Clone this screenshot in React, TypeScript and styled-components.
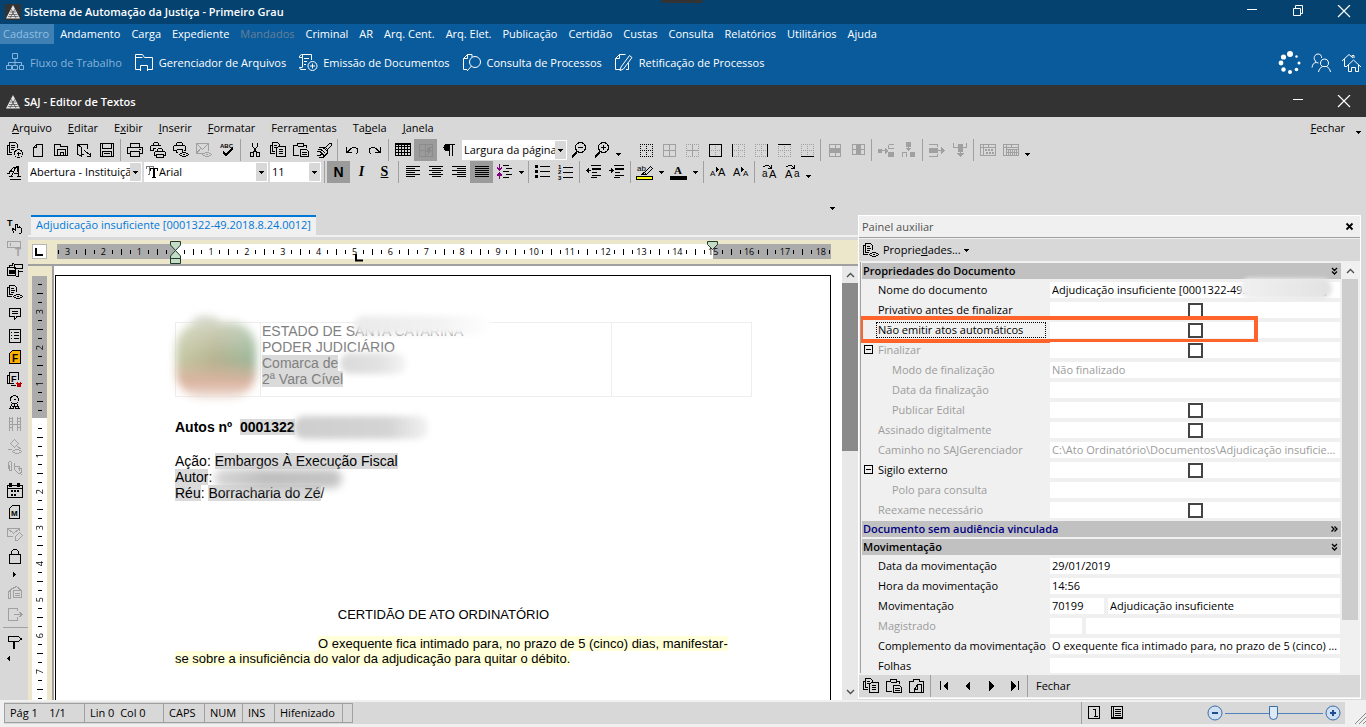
import React, { ReactNode } from 'react';
import styled, { createGlobalStyle, css } from 'styled-components';

const UI_FONT = '"Open Sans", "Noto Sans", sans-serif';
const DOC_FONT = '"Liberation Sans", Arial, sans-serif';
const C = {
  navy: '#05426f',
  blue: '#0a5b9b',
  dark: '#333333',
  face: '#d8d8d8',
  pale: '#f0f0f0',
  line: '#a0a0a0',
  cream: '#ece6ca',
  orange: '#ff642b',
  link: '#0078d7',
};

const GlobalStyle = createGlobalStyle`
  * { box-sizing: border-box; }
  body { margin: 0; background: ${C.face}; font-family: ${UI_FONT}; font-size: 11px; line-height: 16px; color: #000; }
  button, input, select { font: inherit; color: inherit; margin: 0; padding: 0; border: 0; border-radius: 0; background: none; }
  svg { display: block; flex: none; }
`;

/* ---------- icons: 18 x 18 pixel grid, outline path, filled path, lettering ---------- */

type Glyph = { s?: string; f?: string; x?: ReactNode };

const letter = (x: number, y: number, size: number, t: string, bold = true) => (
  <text x={x} y={y} fontSize={size} fontWeight={bold ? 700 : 400} fontFamily="Liberation Sans, sans-serif" fill="currentColor" stroke="none">
    {t}
  </text>
);

const PAGES = 'M5.5 12.5H1.5V4.5H3.5M5.5 10.5H3.5V1.5H8.5L10.5 3.5V5M5 4.5H8M5 6.5H8';
const EYE = 'M7.5 13.5C9 11 15 11 16.5 13.5C15 16 9 16 7.5 13.5ZM11 13.5H13';
const GRID_DOTS = 'M3.5 3v13M9.5 3v13M15.5 3v13M3 3.5h13M3 9.5h13M3 15.5h13';

const GLYPHS: Record<string, Glyph> = {
  docPlus: { s: 'M6 13.5H1.5V4.5H3.5V1.5H9.5L11.5 3.5V7M3.5 4.5V11.5H6M5 4.5H9M5 6.5H9M5 8.5H8M12.5 8.5A4 4 0 1 0 12.5 16.5A4 4 0 1 0 12.5 8.5M12.5 10.5V15M10.5 12.5H15' },
  newDoc: { s: 'M4.5 15.5V6.5L7.5 3.5H13.5V15.5ZM4.5 6.5H7.5V3.5' },
  open: { s: 'M5 14.5H2.5V3.5H8.5V5.5H15.5V14.5H5.5V8.5H13.5V14.5M8.5 14V11.5H11.5V14' },
  docArrow: { s: 'M2.5 14V3.5H12.5V8M2.5 3.5L6.5 6.5V15.5L2.5 13M7 13.5H9M9.5 9.5L15.5 14.5M15.5 12V15.5H12' },
  save: { s: 'M2.5 2.5H15.5V15.5H2.5ZM4.5 3V7.5H13.5V3M4.5 15V10.5H13.5V15M6 12.5H12' },
  print: { s: 'M4.5 6V2.5H13.5V6M4.5 12.5H1.5V6.5H16.5V12.5H13.5M4.5 10.5H13.5V15.5H4.5ZM13 8.5H15' },
  printers: { s: 'M4.5 4.5V2.5L5.5 1.5H8.5L9.5 2.5V4.5M4.5 9.5H1.5V5.5L2.5 4.5H11.5L12.5 5.5M4.5 9.5V7.5H7M8.5 10.5V8.5L9.5 7.5H12.5L13.5 8.5V10.5M7.5 14.5H5.5V11.5L6.5 10.5H15.5L16.5 11.5V14.5H14.5M7.5 13.5H14.5V16.5H7.5Z' },
  printEye: { s: 'M4.5 4.5V2.5L5.5 1.5H9.5L10.5 2.5V4.5M4.5 9.5H1.5V5.5L2.5 4.5H12.5L13.5 5.5V9.5H11.5M4.5 8.5H10.5V10.5M4.5 8.5V11.5H6' + EYE },
  mailEye: { s: 'M8 12.5H1.5V2.5H13.5V9.5M1.5 2.5L7.5 8.5L13.5 2.5M1.5 12.5L5.5 7.5' + EYE },
  spell: { s: 'M5 10.5L8 13.5L15 6.5M5 11.5L8 14.5L15 7.5', x: letter(2, 7, 6, 'ABC') },
  cut: { s: 'M6.5 2V5L11 12M11.5 2V5L7 12M7.5 11.5V15.5H4.5V11.5ZM10.5 11.5V15.5H13.5V11.5Z' },
  copy: { s: PAGES + 'M7.5 15.5V7.5L9.5 5.5H16.5V15.5ZM10 8.5H14M10 10.5H14M10 12.5H14' },
  paste: { s: 'M7 14.5H1.5V4.5H5.5V2.5H11.5V4.5H14.5V7M5.5 5.5H11.5M8.5 15.5V8.5H14.5L16.5 10.5V15.5ZM10 11.5H15M10 13.5H15' },
  brush: { s: 'M10.5 6.5L14.5 2.5H16.5V4.5L12.5 8.5M4 6.5H8L12.5 10.5V13M2.5 8.5H6L10.5 12.5M1.5 10.5H5L9 14.5M2 14.5H5L7 12.5M4 16.5H8L12 12.5M8 6.5H10.5L12.5 8.5V11' },
  undo: { s: 'M3.5 6V11.5H9M4 11.5L8 7.5C11 5 16 7 14.5 11.5L12.5 13.5' },
  redo: { s: 'M14.5 6V11.5H9M14 11.5L10 7.5C7 5 2 7 3.5 11.5L5.5 13.5' },
  table: { s: 'M1.5 3.5H16.5V14.5H1.5ZM1 2.5H17M1 5.5H17M1 8.5H17M1 11.5H17M4.5 3V15M7.5 3V15M10.5 3V15M13.5 3V15' },
  tableBolt: { s: 'M2.5 3.5H15.5V15.5H2.5ZM2.5 9.5H9M8.5 3.5V15.5', f: 'M11 6h4l-2 3h2l-5 6 1-4h-2z' },
  pilcrow: { s: 'M9.5 3V15M12.5 3V15M8 3.5H15', f: 'M9 3H7a3 3 0 0 0 0 7h2z' },
  zoomOut: { s: 'M10.5 1.5A5 5 0 1 0 10.5 11.5A5 5 0 1 0 10.5 1.5M8 6.5H13M6.5 10.5L2 15.5M7 11.5L2 16.5' },
  zoomIn: { s: 'M10.5 1.5A5 5 0 1 0 10.5 11.5A5 5 0 1 0 10.5 1.5M8 6.5H13M10.5 4V9M6.5 10.5L2 15.5M7 11.5L2 16.5' },
  gridAll: { s: 'M3.5 3.5H15.5V15.5H3.5ZM9.5 3.5V15.5M3.5 9.5H15.5' },
  mergeRow: { s: 'M3.5 3.5H14.5V15.5H3.5ZM9.5 3V7M9.5 12V16', f: 'M3 7h12v5H3z' },
  mergeCol: { s: 'M3.5 3.5H15.5V13.5H3.5ZM3 8.5H7M12 8.5H16', f: 'M7 3h5v11H7z' },
  splitA: { s: 'M1 9.5H9M11.5 3.5H17M11.5 3.5V7.5H17', f: 'M1 8h4v4H1zM8 7l3 3-3 3zM11 11h6v5h-6z' },
  splitB: { s: 'M8.5 2V9M2.5 16V11.5H6.5V16', f: 'M6 1h5v5H6zM5 7h7l-4 3zM10 11h5v5h-5z' },
  splitC: { s: 'M1 3.5H9.5V6M9.5 13V15.5H1M9 9.5H16', f: 'M1 7h9v5H1zM13 6l4 3-4 4z' },
  splitD: { s: 'M2.5 2V6.5H7M15.5 2V6.5H11M9.5 7V15', f: 'M7 3h5v8H7zM5 12h8l-4 4z' },
  tableA: { s: 'M1.5 3.5H16.5V14.5H1.5ZM1 6.5H17M4.5 3V15M9.5 3V6', f: 'M6 8h2v2H6zM9 8h2v2H9zM12 8h2v2h-2zM7 11h2v2H7zM10 11h2v2h-2zM13 11h2v2h-2z' },
  tableB: { s: 'M1.5 3.5H16.5V14.5H1.5ZM1 6.5H17M4.5 3V15M9.5 3V6M6.5 8V14M8.5 8V14M10.5 8V14M12.5 8V14M14.5 8V14M5 8.5H16M5 11.5H16' },
  styles: { s: 'M4 16.5H15M10.5 3.5L5 13.5M11.5 3.5L12.5 13.5M12.5 3V13.5M8 10.5H12M3 13.5H7M11 13.5H15M7.5 4.5L2.5 10.5M8.5 4V7M4 8.5H8M1 10.5H4' },
  left: { s: 'M2 3.5H16M2 5.5H11M2 7.5H16M2 9.5H11M2 11.5H16M2 13.5H11' },
  center: { s: 'M2 3.5H16M4.5 5.5H13.5M2 7.5H16M4.5 9.5H13.5M2 11.5H16M4.5 13.5H13.5' },
  right: { s: 'M2 3.5H16M7 5.5H16M2 7.5H16M7 9.5H16M2 11.5H16M7 13.5H16' },
  justify: { s: 'M2 3.5H16M2 5.5H16M2 7.5H16M2 9.5H16M2 11.5H16M2 13.5H16' },
  spacing: {
    s: 'M7 2.5H13M10 5.5H16M7 8.5H13M10 11.5H16M7 14.5H13',
    x: <path d="M3.5 1V7M1 4.5L3.5 7L6 4.5M3.5 10V16M1 13L3.5 10.5L6 13" stroke="#800080" fill="none" strokeWidth={1.5} />,
  },
  bullets: { s: 'M6 3.5H16M6 8.5H16M6 13.5H16', f: 'M1 2h3v3H1zM1 7h3v3H1zM1 12h3v3H1z' },
  numbers: { s: 'M6 4.5H16M6 9.5H16M6 14.5H16', x: <>{letter(1, 6, 6, '1')}{letter(1, 11, 6, '2')}{letter(1, 17, 6, '3')}</> },
  outdent: { s: 'M6 2.5H16M7 5.5H16M7 6.5H16M7 9.5H12M7 12.5H16M6 14.5H12M1 7.5H6', f: 'M4 5v5L1 7.5z' },
  indent: { s: 'M6 2.5H16M7 5.5H16M7 6.5H16M7 9.5H12M7 12.5H16M6 14.5H12M1 7.5H6', f: 'M3 5v5L6 7.5z' },
  highlight: {
    s: 'M8.5 9.5L14.5 3.5L16.5 5.5L10.5 11.5ZM5 11.5L8.5 9.5L10.5 11.5L5 11.5',
    x: <>{letter(1, 8, 8, 'ab', false)}<path d="M.5 13.5H16.5V16.5H.5Z" fill="#ffff00" stroke="#000" /></>,
  },
  fontColor: { f: 'M1 13h17v4H1z', x: <text x={5} y={11} fontSize={11} fontWeight={700} fontFamily="Liberation Serif, serif" fill="currentColor">A</text> },
  grow: { f: 'M7 4l3 2-3 3z', x: <>{letter(1, 13, 8, 'A', false)}{letter(9, 13, 11, 'A', false)}</> },
  shrink: { f: 'M9 4l3 2-3 3z', x: <>{letter(1, 13, 11, 'A', false)}{letter(11, 13, 8, 'A', false)}</> },
  toUpper: { s: 'M3.5 4L5.5 2.5H8.5L11 5M11.5 2V5.5H8', x: <>{letter(2, 14, 10, 'a', false)}{letter(9, 15, 11, 'A', false)}</> },
  toLower: { s: 'M3.5 4L5.5 2.5H8.5L11 5M11.5 2V5.5H8', x: <>{letter(2, 15, 11, 'A', false)}{letter(11, 14, 10, 'a', false)}</> },
  textHand: { s: 'M8.5 16.5L6.5 13.5V11.5L9.5 13V7.5H11.5V10.5H13.5V9.5L15.5 11.5V15.5L13.5 17', x: letter(1, 9, 9, 'T') },
  textBox: { s: 'M1.5 2.5H14.5V8.5H1.5ZM4 4V7', x: letter(9, 17, 10, 'T') },
  stack: { s: 'M3.5 6V4.5H6.5V2.5H8M8.5 3.5H16.5V7.5H8.5ZM1.5 6.5H9.5V14.5H1.5ZM16.5 10.5H12.5M12.5 8.5V15.5H9.5', f: 'M3 9h6v4H3z' },
  docEye: { s: 'M6 13.5H1.5V4.5H3.5M7 11.5H3.5V2.5H8.5L10.5 4.5V9M5 5.5H8M5 7.5H9M5 9.5H8' + EYE },
  comment: { s: 'M3.5 3.5H14.5V11.5H11L8.5 14.5V11.5H3.5ZM6 6.5H12M6 8.5H12' },
  list: { s: 'M3.5 2.5H14.5V15.5H3.5ZM5 5.5H6M8 5.5H13M5 8.5H6M8 8.5H13M5 11.5H6M8 11.5H13' },
  formF: { x: <><path d="M3.5 14.5V4.5L6.5 1.5H14.5V14.5Z" fill="#ffb000" stroke="#000" />{letter(6, 13, 10, 'F')}</> },
  formX: { s: 'M10 14.5H5M4 12.5H1.5V4.5H3.5V1.5H12.5V9M3.5 4V12.5H8', x: <>{letter(5, 11, 9, 'F')}<path d="M11 12L15 16M15 12L11 16" stroke="#c00000" strokeWidth={2} /></> },
  seal: { s: 'M8.5 2.5A4 4 0 1 0 8.5 10.5A4 4 0 1 0 8.5 2.5M8 6.5H10M6.5 10L4 15.5H7L8.5 12L10 15.5H13L10.5 10M6 13.5H12' },
  film: { s: 'M3.5 2V16M6.5 2V16M11.5 2V16M14.5 2V16M3 3.5H7M3 6.5H7M3 9.5H7M3 12.5H7M11 3.5H15M11 6.5H15M11 9.5H15M11 12.5H15M7 9.5H11' },
  gavel: { s: 'M4.5 6.5L8.5 2.5L12.5 6.5L8.5 10.5ZM10 8.5L15 12M2 12.5H6M6.5 14.5C8 12 14 12 15.5 14.5C14 17 8 17 6.5 14.5' },
  clip: { s: 'M2.5 10V3.5L4 2.5L5.5 3.5V11.5H3.5V6M8.5 4V10.5L12.5 14.5L15.5 13.5V9.5H11.5M9 7.5H13.5V12M14 14L16.5 16.5' },
  calendar: { s: 'M1.5 4.5H16.5V16.5H1.5ZM1 7.5H17', f: 'M3 2h3v4H3zM11 2h3v4h-3zM5 9h2v2H5zM8 9h2v2H8zM11 9h2v2h-2zM5 13h2v2H5zM8 13h2v2H8z' },
  formM: { s: 'M3.5 15.5V5.5L6.5 2.5H13.5V15.5Z', x: letter(5, 13, 8, 'M') },
  mailPen: { s: 'M7 11.5H1.5V3.5H13.5V6M1.5 3.5L7.5 8.5L13.5 3.5M9.5 11.5L13.5 7.5L16.5 10.5L11.5 15.5H9.5Z' },
  lock: { s: 'M3.5 7.5H14.5V16.5H3.5ZM5.5 7V4.5L7.5 2.5H10.5L12.5 4.5V7' },
  phone: { s: 'M2.5 16V8.5L4.5 7.5V15.5H2.5M4.5 6.5L10.5 3.5L15.5 7.5V14.5H7.5V7.5H15.5M9 10.5H14M9 12.5H14' },
  exportDoc: { s: 'M11.5 6V3.5H2.5V15.5H11.5V12M8 9.5H16M13.5 7L16 9.5L13.5 12' },
  signpost: { s: 'M2.5 4.5H12.5L15.5 7L12.5 9.5H2.5ZM8.5 10V17M7.5 10V17' },
  pasteBack: { s: 'M7 15.5H1.5V4.5H5.5V2.5H11.5V4.5H15.5V15.5H13M6.5 12.5L9.5 7.5H13.5V15.5H6.5V12.5H9.5V8' },
  first: { s: 'M4.5 4V13', f: 'M12 4v10l-5-5z' },
  prev: { f: 'M11 4v10L6 9z' },
  next: { f: 'M7 4v10l5-5z' },
  last: { s: 'M13.5 4V13', f: 'M6 4v10l5-5z' },
  pageOne: { s: 'M3.5 2.5H14.5V14.5H3.5ZM8 5.5H10.5V12.5M9 12.5H13' },
  pageLines: { s: 'M3.5 2.5H14.5V14.5H3.5ZM5.5 2.5V14.5M7 5.5H13M7 7.5H13M7 9.5H13M7 11.5H13M3 13.5H15' },
};

function Icon({ name }: { name: string }) {
  const g = GLYPHS[name];
  return (
    <svg width="18" height="18" viewBox="0 0 18 18" fill="none" stroke="none" shapeRendering="crispEdges" aria-hidden="true">
      {g.s && <path d={g.s} stroke="currentColor" />}
      {g.f && <path d={g.f} fill="currentColor" />}
      {g.x}
    </svg>
  );
}

const EDGE: Record<string, string> = {
  inner: 'M9.5 3V16M3 9.5H16',
  outer: 'M3.5 3.5H15.5V15.5H3.5Z',
  left: 'M3.5 3V16',
  right: 'M15.5 3V16',
  top: 'M3 3.5H16',
  bottom: 'M3 15.5H16',
};

function BorderIcon({ edge, tone = C.line }: { edge?: string; tone?: string }) {
  return (
    <svg width="18" height="18" viewBox="0 0 18 18" fill="none" shapeRendering="crispEdges" aria-hidden="true">
      <path d={GRID_DOTS} stroke={tone} strokeDasharray="1 1" />
      {edge && <path d={EDGE[edge]} stroke={edge === 'inner' ? C.line : '#000'} />}
    </svg>
  );
}

const Caret = ({ dir = 'down' }: { dir?: 'down' | 'left' | 'right' }) => {
  const d = { down: 'M0 1h5v1H4v1H3v1H2V3H1V2H0z', left: 'M3 0v5H2V4H1V3H0V2h1V1h1V0z', right: 'M1 0v5h1V4h1V3h1V2H3V1H2V0z' }[dir];
  return (
    <svg width="5" height="5" viewBox="0 0 5 5" shapeRendering="crispEdges" aria-hidden="true">
      <path d={d} fill="#000" />
    </svg>
  );
};

const Logo = () => (
  <svg width="16" height="16" viewBox="0 0 16 16" aria-hidden="true">
    <rect width="16" height="16" fill={C.dark} />
    <path d="M8 1L15 14.5H1Z" fill="#e6e6e6" />
    <path d="M6 5L11 14M10 5L5 14M5 8H11M4 10.5H12.5M3 12.5H13.5" stroke={C.dark} strokeWidth=".6" />
  </svg>
);

/* ---------- window chrome ---------- */

const Shell = styled.div`
  display: flex;
  flex-direction: column;
  height: 100vh;
  min-height: 480px;
  overflow: hidden;
`;

const TitleBar = styled.header<{ $dark?: boolean }>`
  position: relative;
  display: flex;
  align-items: center;
  flex: none;
  height: ${p => (p.$dark ? 32 : 24)}px;
  padding: ${p => (p.$dark ? 2 : 0)}px 0 0 5px;
  gap: 3px;
  background: ${p => (p.$dark ? C.dark : C.navy)};
  color: #fff;
`;
const TitleText = styled.h1`
  flex: 1;
  margin: 0;
  font-size: 11px;
  font-weight: 600;
  line-height: 16px;
`;
const ControlGroup = styled.div`
  display: flex;
`;
const WinButton = styled.button`
  display: flex;
  justify-content: center;
  width: 46px;
  height: 20px;
  align-items: center;
  &:last-child { width: 45px; }
`;
const Notch = styled.i`
  position: absolute;
  top: 0;
  left: 50%;
  width: 42px;
  height: 3px;
  margin-left: -22px;
  background: ${C.dark};
  border-radius: 0 0 3px 3px;
`;

const WinIcon = ({ kind }: { kind: 'min' | 'max' | 'close' }) => (
  <svg width="14" height="14" viewBox="0 0 14 14" fill="none" stroke="#fff" aria-hidden="true">
    {kind === 'min' && <path d="M2 4.5H12" />}
    {kind === 'max' && <path d="M2.5 3.5H9.5V10.5H2.5ZM4.5 3V.5H11.5V8.5H10" />}
    {kind === 'close' && <path d="M1 0L13 12M13 0L1 12" strokeWidth="1.2" />}
  </svg>
);

function WinControls({ full }: { full?: boolean }) {
  return (
    <ControlGroup>
      <WinButton aria-label="Minimizar"><WinIcon kind="min" /></WinButton>
      {full && <WinButton aria-label="Restaurar"><WinIcon kind="max" /></WinButton>}
      <WinButton aria-label="Fechar"><WinIcon kind="close" /></WinButton>
    </ControlGroup>
  );
}

const MainMenu = styled.nav`
  display: flex;
  flex: none;
  gap: 1px;
  height: 20px;
  background: ${C.blue};
  color: #fff;
`;
const MainMenuItem = styled.button<{ $state?: 'active' | 'off' }>`
  padding: 0 5px;
  white-space: nowrap;
  ${p => p.$state === 'active' && css`padding-left: 3px; background: #3e80b4; color: #8fbfe4;`}
  ${p => p.$state === 'off' && css`color: #66809a;`}
`;
const ShortcutBar = styled.div`
  display: flex;
  align-items: center;
  flex: none;
  height: 41px;
  padding: 0 4px 4px 5px;
  gap: 12px;
  background: ${C.blue};
  color: #fff;
`;
const Shortcut = styled.button<{ $off?: boolean }>`
  display: flex;
  align-items: center;
  gap: 4px;
  white-space: nowrap;
  color: ${p => (p.$off ? '#86b3da' : '#fff')};
`;
const ShortcutTray = styled.div`
  display: flex;
  align-items: center;
  gap: 9px;
  margin-left: auto;
`;

const BIG: Record<string, string> = {
  flow: 'M7.5 1.5H12.5V6.5H7.5ZM10 7V13M3.5 13V10.5H16.5V13M1.5 13.5H6.5V17.5H1.5ZM7.5 13.5H12.5V17.5H7.5ZM14.5 13.5H18.5V17.5H14.5Z',
  files: 'M6 17.5H1.5V2.5H8.5L10.5 5.5H18.5V17.5H14M1.5 5.5H6L8.5 5.5M6.5 19V13.5H13.5V19',
  docs: 'M8 17.5H2.5L1.5 15.5H4M4.5 15.5V5.5H1.5V4L3.5 2.5H13.5V8M4.5 5V3M6 6.5H11M6 9.5H9M6 12.5H8M14.5 9.5A4.5 4.5 0 1 0 14.5 18.5A4.5 4.5 0 1 0 14.5 9.5M14.5 11.5V16.5M12 14H17',
  search: 'M5 17.5H1.5V6.5L5.5 2.5H10V5M1.5 6.5H5.5V2.5M13 4.5A5.5 5.5 0 1 0 13 15.5A5.5 5.5 0 1 0 13 4.5M9.5 14L5 19',
  edit: 'M6 17.5H1.5V6.5L5.5 2.5H11.5M1.5 6.5H5.5V2.5M7 15L15.5 3.5L18 5.5L9.5 17L6 18.5ZM12 17.5H14.5V11',
  users: 'M5 10L4.5 9C1.5 6 4 2 7 2C9.5 2 11 4 10.5 6M1 15.5C1.5 12 3 10.5 5.5 10.5L7.5 11M13.5 7A4 4 0 0 0 11.5 14.5H15.5A4 4 0 0 0 13.5 7M7.5 20C8 17 9.5 15.5 11.5 14.5M19.5 20C19 17 17.5 15.5 15.5 14.5',
  home: 'M1 9L8 2.5L12 6M3.5 7V14.5H6M11 5V3.5H13V6M5 15L12.5 8L20 15M7.5 13V19.5H10.5V15.5H14.5V19.5H17.5V13',
};
const BigIcon = ({ name }: { name: string }) => (
  <svg width="21" height="21" viewBox="0 0 21 21" fill="none" stroke="currentColor" aria-hidden="true">
    <path d={BIG[name]} />
  </svg>
);
const Spinner = () => (
  <svg width="24" height="24" viewBox="0 0 24 24" fill="#fff" aria-hidden="true">
    <circle cx="12" cy="3" r="3" /><circle cx="5.5" cy="6" r="2.6" /><circle cx="3" cy="12" r="2.4" /><circle cx="5.5" cy="18.5" r="2.2" />
    <circle cx="12" cy="21" r="2" /><circle cx="18.5" cy="18.5" r="1.8" /><circle cx="21" cy="12" r="1.5" /><circle cx="18.5" cy="5.5" r="1.2" />
  </svg>
);

/* ---------- editor menus and tool bars ---------- */

const EditorMenu = styled.nav`
  display: flex;
  align-items: center;
  flex: none;
  height: 22px;
  padding: 0 3px 0 4px;
`;
const EditorMenuItem = styled.button<{ $end?: boolean }>`
  padding: 0 8px;
  ${p => p.$end && css`margin-left: auto;`}
`;
const ToolRow = styled.div`
  display: flex;
  align-items: center;
  flex: none;
  height: 22px;
  padding-left: 3px;
`;
const ToolGap = styled.div`
  flex: none;
  height: 32px;
  display: flex;
  align-items: flex-end;
  padding: 0 0 4px 830px;
`;
const ToolButton = styled.button<{ $on?: boolean; $off?: boolean }>`
  display: flex;
  align-items: center;
  justify-content: center;
  flex: none;
  width: 23px;
  height: 22px;
  background: ${p => (p.$on ? '#9b9b9b' : 'transparent')};
  color: ${p => (p.$off ? (p.$on ? '#8c8c8c' : C.line) : '#000')};
`;
const ToolLetter = styled.span<{ $kind: 'bold' | 'italic' | 'under' }>`
  font-family: "Liberation Serif", serif;
  font-size: 14px;
  font-weight: 700;
  ${p => p.$kind === 'bold' && css`font-family: ${DOC_FONT};`}
  ${p => p.$kind === 'italic' && css`font-style: italic;`}
  ${p => p.$kind === 'under' && css`text-decoration: underline;`}
`;
const Divider = styled.i`
  flex: none;
  width: 1px;
  height: 22px;
  margin: 0 2px;
  background: ${C.line};
`;
const MoreButton = styled.button<{ $w: number; $low?: boolean }>`
  display: flex;
  align-items: ${p => (p.$low ? 'flex-end' : 'center')};
  justify-content: ${p => (p.$low ? 'flex-start' : 'center')};
  flex: none;
  width: ${p => p.$w}px;
  height: 22px;
  padding: ${p => (p.$low ? '0 0 4px 3px' : '0')};
`;
const Combo = styled.label<{ $w: number; $after: number }>`
  display: flex;
  align-items: center;
  flex: none;
  width: ${p => p.$w}px;
  height: 20px;
  margin: 0 ${p => p.$after}px 0 2px;
  padding-left: 1px;
  background: #fff;
  border: 1px solid #fff;
`;
const ComboSelect = styled.select`
  flex: 1;
  min-width: 0;
  height: 18px;
  appearance: none;
  outline: 0;
  overflow: hidden;
`;
const ComboArrow = styled.i`
  display: flex;
  align-items: center;
  justify-content: center;
  flex: none;
  width: 11px;
  height: 18px;
  background: ${C.face};
  pointer-events: none;
`;

function Field({ label, value, w, after = 0, prefix }: { label: string; value: string; w: number; after?: number; prefix?: ReactNode }) {
  return (
    <Combo $w={w} $after={after}>
      {prefix}
      <ComboSelect aria-label={label} defaultValue={value}>
        <option>{value}</option>
      </ComboSelect>
      <ComboArrow><Caret /></ComboArrow>
    </Combo>
  );
}

const FontMark = () => (
  <svg width="13" height="14" viewBox="0 0 13 14" fill="none" shapeRendering="crispEdges" aria-hidden="true">
    <path d="M.5 4V1.5H7.5V3M3.5 2V9M2 9.5H4" stroke="#777" />
    <path d="M4.5 6V3.5H11.500V6M7.5 4V12.5M8.5 4V12.5M6 12.5H10" stroke="#000" />
  </svg>
);

const Tools = ({ names, off, on }: { names: string[]; off?: string[]; on?: string[] }) => (
  <>
    {names.map(n => (
      <ToolButton key={n} aria-label={n} $off={off?.includes(n)} $on={on?.includes(n)}>
        <Icon name={n} />
      </ToolButton>
    ))}
  </>
);

/* ---------- workspace ---------- */

const Workspace = styled.main`
  display: flex;
  flex: 1;
  min-height: 0;
`;
const SideTools = styled.aside`
  display: flex;
  flex-direction: column;
  flex: none;
  width: 28px;
  padding-left: 3px;
  overflow: hidden;
`;
const SideArrow = styled.button<{ $h: number; $start?: boolean }>`
  display: flex;
  align-items: center;
  flex: none;
  justify-content: ${p => (p.$start ? 'flex-start' : 'center')};
  width: 23px;
  height: ${p => p.$h}px;
  padding-left: ${p => (p.$start ? 4 : 0)}px;
`;
const SideRule = styled.i`
  flex: none;
  height: 1px;
  margin: 2px 0;
  background: ${C.line};
`;

const Editor = styled.section`
  display: flex;
  flex-direction: column;
  flex: 1;
  min-width: 0;
`;
const TabStrip = styled.div`
  display: flex;
  flex: none;
  height: 22px;
  margin-bottom: 3px;
  padding-left: 3px;
  border-bottom: 2px solid ${C.pale};
`;
const Tab = styled.button`
  padding: 0 5px 4px;
  border-top: 2px solid ${C.link};
  background: ${C.pale};
  color: ${C.link};
  white-space: nowrap;
`;
const RulerBar = styled.div`
  position: relative;
  display: flex;
  flex: none;
  height: 26px;
  padding: 4px 0 0 4px;
  background: ${C.cream};
  border-bottom: 2px solid ${C.line};
  overflow: hidden;
`;
const TabStop = styled.button`
  width: 15px;
  height: 15px;
  margin-right: 7px;
  background: #fff;
  border: 1px solid #b4b4b4;
  flex: none;
`;
const HScale = styled.div`
  display: flex;
  flex: none;
  width: 780px;
  height: 15px;
  background: linear-gradient(to right, transparent 3px, #ababab 3px, #ababab 121px, #fff 121px, #fff 659px, #ababab 659px, #ababab 777px, transparent 777px);
`;
const HCell = styled.span`
  display: flex;
  flex: 1 1 0;
  width: 0;
  align-items: center;
  justify-content: center;
  font-size: 9px;
  line-height: 14px;
`;
const Tick = styled.i<{ $long?: boolean; $row?: boolean }>`
  flex: none;
  background: #000;
  width: ${p => (p.$row ? (p.$long ? 6 : 4) : 1)}px;
  height: ${p => (p.$row ? 1 : p.$long ? 6 : 4)}px;
`;
const Markers = styled.svg`
  position: absolute;
  left: 0;
  top: 0;
`;
const PaperRow = styled.div`
  display: flex;
  flex: 1;
  min-height: 0;
`;
const VRuler = styled.div`
  display: flex;
  flex-direction: column;
  flex: none;
  width: 26px;
  padding: 10px 5px 0 4px;
  background: ${C.cream};
  border-right: 2px solid ${C.line};
  overflow: hidden;
`;
const VScale = styled.div`
  flex: 1;
  padding-top: 4px;
  background: linear-gradient(to bottom, #ababab 142px, #fff 142px);
`;
const VCell = styled.span`
  display: flex;
  align-items: center;
  justify-content: center;
  height: 9px;
  font-size: 9px;
  line-height: 9px;
`;
const VNumber = styled.b`
  font-weight: 400;
  writing-mode: vertical-rl;
  transform: rotate(180deg);
`;
const Viewport = styled.div`
  flex: 1;
  min-width: 0;
  padding: 9px 11px 0 1px;
  background: #fff;
  overflow: hidden;
`;
const Sheet = styled.article`
  position: relative;
  height: 900px;
  padding: 46px 0 0 119px;
  border: 1px solid #000;
  font-family: ${DOC_FONT};
  font-size: 14px;
  line-height: 16px;
`;
const Letterhead = styled.div`
  display: grid;
  grid-template-columns: 84px 351px 140px;
  width: 577px;
  height: 75px;
  border: 1px solid #eeeeee;
  color: #808080;
`;
const HeadCell = styled.div`
  padding-left: 1px;
  white-space: nowrap;
  & + & { border-left: 1px solid #eeeeee; }
`;
const Line = styled.p<{ $gap?: number; $bold?: boolean }>`
  width: 537px;
  margin: ${p => p.$gap ?? 0}px 0 0;
  font-weight: ${p => (p.$bold ? 700 : 400)};
  white-space: pre;
`;
const DocTitle = styled.h2`
  width: 537px;
  margin: 106px 0 0;
  font-size: 13px;
  font-weight: 400;
  line-height: 16px;
  text-align: center;
`;
const Shade = styled.span`
  display: inline-block;
  background: #dadada;
`;
const Act = styled.p`
  width: 562px;
  margin: 13px 0 0;
  font-size: 13px;
  line-height: 15px;
  text-indent: 143px;
`;
const ActText = styled.span`
  background: #ffffd9;
`;
const Smudge = styled.i<{ $x: number; $y: number; $w: number; $h: number; $bg: string; $blur?: number }>`
  position: absolute;
  left: ${p => p.$x}px;
  top: ${p => p.$y}px;
  width: ${p => p.$w}px;
  height: ${p => p.$h}px;
  background: ${p => p.$bg};
  border-radius: 10px;
  filter: blur(${p => p.$blur ?? 3}px);
`;
const Crest = styled(Smudge)`
  border-radius: 26px;
`;

const Scroll = styled.div<{ $track: string; $w: number }>`
  display: flex;
  flex-direction: column;
  flex: none;
  width: ${p => p.$w}px;
  background: ${p => p.$track};
`;
const ScrollButton = styled.button`
  display: flex;
  align-items: center;
  justify-content: center;
  flex: none;
  height: 17px;
`;
const Thumb = styled.i<{ $grow: number; $bg: string }>`
  flex: ${p => p.$grow} 1 0;
  background: ${p => p.$bg};
`;
const Rest = styled.i<{ $grow: number }>`
  flex: ${p => p.$grow} 1 0;
`;
const Chevron = ({ up }: { up?: boolean }) => (
  <svg width="9" height="6" viewBox="0 0 9 6" fill="none" stroke="#505050" strokeWidth="1.4" aria-hidden="true">
    <path d={up ? 'M1 5L4.5 1.5L8 5' : 'M1 1L4.5 4.5L8 1'} />
  </svg>
);

/* ---------- auxiliary panel ---------- */

const Panel = styled.aside`
  display: flex;
  flex-direction: column;
  flex: none;
  width: 503px;
  margin: 0 5px 1px 0;
  border: 1px solid #fff;
  background: ${C.pale};
`;
const PanelTitle = styled.header`
  display: flex;
  align-items: center;
  justify-content: space-between;
  flex: none;
  height: 22px;
  padding: 0 6px 0 3px;
  border-bottom: 1px solid ${C.line};
  color: #505050;
`;
const PanelBar = styled.div`
  display: flex;
  align-items: center;
  flex: none;
  height: 22px;
  margin: 1px 0;
  background: ${C.face};
`;
const PanelMenu = styled.button`
  display: flex;
  align-items: center;
  gap: 3px;
  padding-left: 1px;
`;
const PanelButton = styled.button`
  padding: 0 6px;
`;
const PanelBody = styled.div`
  display: flex;
  flex: 1;
  min-height: 0;
  border-left: 1px solid ${C.line};
  margin: 0 2px 1px 1px;
`;
const Props = styled.div`
  display: flex;
  flex-direction: column;
  flex: 1;
  min-width: 0;
  padding: 0 1px;
  overflow: hidden;
`;
const Group = styled.h2<{ $navy?: boolean }>`
  display: flex;
  align-items: center;
  justify-content: space-between;
  flex: none;
  height: 16px;
  margin: 1px 0;
  padding: 0 3px 0 1px;
  background: #c1c1c1;
  color: ${p => (p.$navy ? '#000080' : '#000')};
  font-size: 11px;
  font-weight: 600;
  line-height: 16px;
`;
const PropRow = styled.div<{ $off?: boolean }>`
  position: relative;
  display: grid;
  grid-template-columns: 15px 173px 1fr;
  align-items: center;
  flex: none;
  height: 20px;
  padding-right: 1px;
  color: ${p => (p.$off ? '#9c9c9c' : '#000')};
`;
const PropLabel = styled.label<{ $sub?: boolean; $focus?: boolean }>`
  grid-column: 2;
  padding-left: ${p => (p.$sub ? 15 : 1)}px;
  white-space: nowrap;
  ${p => p.$focus && css`margin: 0 4px 0 -1px; padding-left: 1px; border: 1px dotted #000; line-height: 14px;`}
`;
const Toggle = styled.button`
  position: absolute;
  left: 2px;
  top: 5px;
  width: 9px;
  height: 9px;
  border: 1px solid #000;
  &::after { content: ''; display: block; height: 1px; margin: 0 1px; background: #000; }
`;
const Values = styled.span`
  grid-column: 3;
  display: flex;
  gap: 4px;
  height: 16px;
`;
const TextBox = styled.input<{ $w?: number }>`
  flex: ${p => (p.$w ? 'none' : '1')};
  width: ${p => (p.$w ? p.$w + 'px' : 'auto')};
  min-width: 0;
  height: 16px;
  padding: 0 2px;
  background: #fff;
  text-overflow: ellipsis;
  outline: 0;
`;
const CheckCell = styled.span`
  display: flex;
  flex: 1;
  align-items: center;
  justify-content: center;
  background: #fff;
`;
const Check = styled.input`
  appearance: none;
  width: 15px;
  height: 15px;
  border: 2px solid #444;
  background: #fff;
`;
const Callout = styled.i`
  position: absolute;
  left: -3px;
  right: 83px;
  top: -4px;
  height: 27px;
  border: 4px solid ${C.orange};
  pointer-events: none;
`;

type Prop = { id: string; label: string; off?: boolean; sub?: boolean; toggle?: boolean; focus?: boolean; check?: boolean; value?: string; code?: string; codeWidth?: number; hidden?: boolean };

const DOC_PROPS: Prop[] = [
  { id: 'nome', label: 'Nome do documento', value: 'Adjudicação insuficiente [0001322-49.2018.8.24.0012]', hidden: true },
  { id: 'privativo', label: 'Privativo antes de finalizar', check: true },
  { id: 'naoemitir', label: 'Não emitir atos automáticos', check: true, focus: true },
  { id: 'finalizar', label: 'Finalizar', check: true, off: true, toggle: true },
  { id: 'modo', label: 'Modo de finalização', value: 'Não finalizado', off: true, sub: true },
  { id: 'datafin', label: 'Data da finalização', value: '', off: true, sub: true },
  { id: 'edital', label: 'Publicar Edital', check: true, off: true, sub: true },
  { id: 'assinado', label: 'Assinado digitalmente', check: true, off: true },
  { id: 'caminho', label: 'Caminho no SAJGerenciador', value: 'C:\\Ato Ordinatório\\Documentos\\Adjudicação insuficiente.saj', off: true },
  { id: 'sigilo', label: 'Sigilo externo', check: true, toggle: true },
  { id: 'polo', label: 'Polo para consulta', value: '', off: true, sub: true },
  { id: 'reexame', label: 'Reexame necessário', check: true, off: true },
];
const MOV_PROPS: Prop[] = [
  { id: 'datamov', label: 'Data da movimentação', value: '29/01/2019' },
  { id: 'horamov', label: 'Hora da movimentação', value: '14:56' },
  { id: 'mov', label: 'Movimentação', value: 'Adjudicação insuficiente', code: '70199', codeWidth: 54 },
  { id: 'magistrado', label: 'Magistrado', value: '', code: '', codeWidth: 32, off: true },
  { id: 'complemento', label: 'Complemento da movimentação', value: 'O exequente fica intimado para, no prazo de 5 (cinco) dias, manifestar-se' },
  { id: 'folhas', label: 'Folhas', value: '' },
];

const PropItem = ({ p }: { p: Prop }) => (
  <PropRow $off={p.off}>
    {p.toggle && <Toggle aria-label={'Recolher ' + p.label} />}
    <PropLabel htmlFor={p.id} $sub={p.sub} $focus={p.focus}>{p.label}</PropLabel>
    <Values>
      {p.check && <CheckCell><Check type="checkbox" id={p.id} /></CheckCell>}
      {p.codeWidth && <TextBox $w={p.codeWidth} aria-label={p.label + ' código'} defaultValue={p.code} />}
      {p.value !== undefined && <TextBox id={p.id} defaultValue={p.value} />}
    </Values>
    {p.hidden && <Smudge $x={378} $y={-2} $w={92} $h={21} $blur={2} $bg="linear-gradient(to right, #f0f0f0, #e2e2e2)" />}
    {p.focus && <Callout />}
  </PropRow>
);

const DoubleChevron = ({ side }: { side?: boolean }) => (
  <svg width="7" height="8" viewBox="0 0 7 8" fill="none" stroke="#000" strokeWidth="1.3" aria-hidden="true">
    <path d={side ? 'M.5 1.5L3 4L.5 6.5M3.5 1.5L6 4L3.5 6.5' : 'M1 1L3.5 3.5L6 1M1 4.5L3.5 7L6 4.5'} />
  </svg>
);

/* ---------- status bar ---------- */

const StatusBar = styled.footer`
  display: flex;
  flex: none;
  height: 27px;
  padding: 2px 0 3px 4px;
  background: ${C.pale};
`;
const StatusCells = styled.div`
  display: flex;
  flex: 1;
  padding: 1px 0;
  background: ${C.face};
`;
const StatusCell = styled.span<{ $w: number }>`
  width: ${p => p.$w}px;
  padding-left: 5px;
  border: 1px solid ${C.line};
  border-left: 0;
  line-height: 18px;
  white-space: pre;
  &:first-child { border-left: 1px solid ${C.line}; }
`;
const ViewTools = styled.div`
  display: flex;
  align-items: center;
  flex: none;
  width: 264px;
  border-left: 1px solid ${C.line};
  background: ${C.face};
`;
const ZoomGroup = styled.div`
  display: flex;
  align-items: center;
  gap: 2px;
  margin-left: auto;
  padding-right: 4px;
`;
const ZoomButton = styled.button`
  display: flex;
`;
const ZoomRange = styled.input`
  appearance: none;
  width: 98px;
  height: 16px;
  background: linear-gradient(#4f81bd, #4f81bd) center / 100% 1px no-repeat;
  &::-webkit-slider-thumb {
    appearance: none;
    width: 9px;
    height: 14px;
    background: #dce9f7;
    border: 1px solid #3a6ea5;
    border-radius: 0 0 5px 5px;
  }
`;
const Grip = styled.div`
  display: flex;
  align-items: flex-end;
  justify-content: flex-end;
  flex: none;
  width: 21px;
`;
const RoundSign = ({ plus }: { plus?: boolean }) => (
  <svg width="16" height="16" viewBox="0 0 16 16" fill="none" aria-hidden="true">
    <circle cx="8" cy="8" r="7" fill="#cfe0f5" stroke="#3a6ea5" />
    <path d={plus ? 'M5 8H11M8 5V11' : 'M5 8H11'} stroke="#1f4e8c" strokeWidth="2" />
  </svg>
);

const range = (a: number, b: number) => Array.from({ length: b - a + 1 }, (_, i) => a + i);
const mark = (k: number, row: boolean) => {
  if (k === 0) return null;
  if (k % 4 === 0) return row ? <VNumber>{Math.abs(k / 4)}</VNumber> : Math.abs(k / 4);
  return <Tick $long={k % 2 === 0} $row={row} />;
};

const MAIN_MENU = ['Cadastro', 'Andamento', 'Carga', 'Expediente', 'Mandados', 'Criminal', 'AR', 'Arq. Cent.', 'Arq. Elet.', 'Publicação', 'Certidão', 'Custas', 'Consulta', 'Relatórios', 'Utilitários', 'Ajuda'];
const EDITOR_MENU = [['', 'A', 'rquivo'], ['', 'E', 'ditar'], ['E', 'x', 'ibir'], ['', 'I', 'nserir'], ['', 'F', 'ormatar'], ['Ferra', 'm', 'entas'], ['Ta', 'b', 'ela'], ['', 'J', 'anela']];
const SHORTCUTS = [['flow', 'Fluxo de Trabalho'], ['files', 'Gerenciador de Arquivos'], ['docs', 'Emissão de Documentos'], ['search', 'Consulta de Processos'], ['edit', 'Retificação de Processos']];

export default function App() {
  return (
    <Shell>
      <GlobalStyle />
      <TitleBar>
        <Logo />
        <TitleText>Sistema de Automação da Justiça - Primeiro Grau</TitleText>
        <Notch />
        <WinControls full />
      </TitleBar>
      <MainMenu>
        {MAIN_MENU.map(m => (
          <MainMenuItem key={m} $state={m === 'Cadastro' ? 'active' : m === 'Mandados' ? 'off' : undefined}>{m}</MainMenuItem>
        ))}
      </MainMenu>
      <ShortcutBar>
        {SHORTCUTS.map(([icon, text], i) => (
          <Shortcut key={icon} $off={i === 0}><BigIcon name={icon} />{text}</Shortcut>
        ))}
        <ShortcutTray>
          <Spinner />
          <BigIcon name="users" />
          <BigIcon name="home" />
        </ShortcutTray>
      </ShortcutBar>

      <TitleBar $dark>
        <Logo />
        <TitleText as="h2">SAJ - Editor de Textos</TitleText>
        <WinControls />
      </TitleBar>
      <EditorMenu>
        {EDITOR_MENU.map(([a, b, c]) => (
          <EditorMenuItem key={a + b + c}>{a}<u>{b}</u>{c}</EditorMenuItem>
        ))}
        <EditorMenuItem $end><u>F</u>echar</EditorMenuItem>
        <MoreButton $w={10} $low aria-label="Mais"><Caret /></MoreButton>
      </EditorMenu>

      <ToolRow role="toolbar">
        <Tools names={['docPlus', 'newDoc', 'open', 'docArrow', 'save']} />
        <Divider />
        <Tools names={['print', 'printers', 'printEye', 'mailEye', 'spell']} off={['mailEye']} />
        <Divider />
        <Tools names={['cut', 'copy', 'paste', 'brush']} />
        <Divider />
        <Tools names={['undo', 'redo']} />
        <Divider />
        <Tools names={['table', 'tableBolt', 'pilcrow']} on={['tableBolt']} off={['tableBolt']} />
        <Field label="Zoom" value="Largura da página" w={105} />
        <Tools names={['zoomOut', 'zoomIn']} />
        <MoreButton $w={21} $low aria-label="Mais"><Caret /></MoreButton>
        <ToolButton aria-label="Sem bordas"><BorderIcon tone="#000" /></ToolButton>
        <Tools names={['gridAll']} off={['gridAll']} />
        {['inner', 'outer', 'left', 'right', 'top', 'bottom'].map(e => (
          <ToolButton key={e} aria-label={'Borda ' + e}><BorderIcon edge={e} /></ToolButton>
        ))}
        <Divider />
        <Tools names={['mergeRow', 'mergeCol']} off={['mergeRow', 'mergeCol']} />
        <Divider />
        <Tools names={['splitA', 'splitB']} off={['splitA', 'splitB']} />
        <Divider />
        <Tools names={['splitC', 'splitD']} off={['splitC', 'splitD']} />
        <Divider />
        <Tools names={['tableA', 'tableB']} off={['tableA', 'tableB']} />
        <MoreButton $w={12} $low aria-label="Mais"><Caret /></MoreButton>
      </ToolRow>
      <ToolRow role="toolbar">
        <Tools names={['styles']} />
        <Field label="Estilo" value="Abertura - Instituição" w={114} />
        <Field label="Fonte" value="Arial" w={124} prefix={<FontMark />} />
        <Field label="Tamanho" value="11" w={51} after={1} />
        <Divider />
        <ToolButton $on aria-label="Negrito"><ToolLetter $kind="bold">N</ToolLetter></ToolButton>
        <ToolButton aria-label="Itálico"><ToolLetter $kind="italic">I</ToolLetter></ToolButton>
        <ToolButton aria-label="Sublinhado"><ToolLetter $kind="under">S</ToolLetter></ToolButton>
        <Divider />
        <Tools names={['left', 'center', 'right', 'justify', 'spacing']} on={['justify']} />
        <MoreButton $w={10} aria-label="Mais"><Caret /></MoreButton>
        <Divider />
        <Tools names={['bullets', 'numbers']} />
        <Divider />
        <Tools names={['outdent', 'indent']} />
        <Divider />
        <Tools names={['highlight']} />
        <MoreButton $w={10} aria-label="Mais"><Caret /></MoreButton>
        <Tools names={['fontColor']} />
        <MoreButton $w={12} aria-label="Mais"><Caret /></MoreButton>
        <Divider />
        <Tools names={['grow', 'shrink']} />
        <Divider />
        <Tools names={['toUpper', 'toLower']} />
        <MoreButton $w={12} $low aria-label="Mais"><Caret /></MoreButton>
      </ToolRow>
      <ToolGap><Caret /></ToolGap>

      <Workspace>
        <SideTools>
          <Tools
            names={['textHand', 'textBox', 'stack', 'docEye', 'comment', 'list', 'formF', 'formX', 'seal', 'film', 'gavel', 'clip', 'calendar', 'formM', 'mailPen', 'lock']}
            off={['textBox', 'film', 'gavel', 'clip', 'mailPen']}
          />
          <SideArrow $h={14} aria-label="Expandir"><Caret dir="right" /></SideArrow>
          <Tools names={['phone', 'exportDoc']} off={['phone', 'exportDoc']} />
          <SideRule />
          <Tools names={['signpost']} />
          <SideArrow $h={12} $start aria-label="Recolher"><Caret dir="left" /></SideArrow>
        </SideTools>

        <Editor>
          <TabStrip><Tab>Adjudicação insuficiente [0001322-49.2018.8.24.0012]</Tab></TabStrip>
          <RulerBar>
            <TabStop aria-label="Tabulação">
              <svg width="13" height="13" viewBox="0 0 13 13"><path d="M3 3V10H10" stroke="#000" strokeWidth="2" fill="none" /></svg>
            </TabStop>
            <HScale>{range(-13, 73).map(k => <HCell key={k}>{mark(k, false)}</HCell>)}</HScale>
            <Markers width="720" height="24" viewBox="0 0 720 24" fill="#c5dcc5" stroke="#1c3c30" aria-hidden="true">
              <path d="M142.5 1.5H152.5V5L147.5 10.5L142.5 5ZM147.5 10.5L152.5 16V23.5H142.5V16ZM142.5 18.5H152.5" />
              <path d="M679.5 1.5H689.5V4.5L684.5 9.5L679.5 4.5Z" />
              <path d="M328 14V20.5H335" fill="none" stroke="#000" strokeWidth="2" />
            </Markers>
          </RulerBar>
          <PaperRow>
            <VRuler>
              <VScale>{range(-15, 31).map(k => <VCell key={k}>{mark(k, true)}</VCell>)}</VScale>
            </VRuler>
            <Viewport>
              <Sheet>
                <Letterhead>
                  <HeadCell />
                  <HeadCell>
                    <div>ESTADO DE SANTA CATARINA</div>
                    <div>PODER JUDICIÁRIO</div>
                    <div><Shade>Comarca de</Shade></div>
                    <div><Shade>2ª Vara Cível</Shade></div>
                  </HeadCell>
                  <HeadCell />
                </Letterhead>
                <Line $gap={22} $bold>Autos nº  <Shade>0001322</Shade></Line>
                <Line $gap={18}>Ação: <Shade>Embargos À Execução Fiscal</Shade></Line>
                <Line><Shade>Autor</Shade>:</Line>
                <Line><Shade>Réu</Shade>: <Shade>Borracharia do Zé</Shade>/</Line>
                <DocTitle>CERTIDÃO DE ATO ORDINATÓRIO</DocTitle>
                <Act>
                  <ActText>O exequente fica intimado para, no prazo de 5 (cinco) dias, manifestar-se sobre a insuficiência do valor da adjudicação para quitar o débito.</ActText>
                </Act>
                <Crest $x={137} $y={40} $w={26} $h={16} $blur={4} $bg="#dcdcd4" />
                <Crest $x={120} $y={46} $w={80} $h={76} $blur={4} $bg="linear-gradient(to bottom, rgba(225,228,215,.7), rgba(205,190,165,.3) 50%, #dcb3a0 80%, #f0e4de), linear-gradient(to right, #c3cfa5, #a9ac84 50%, #83b596)" />
                <Smudge $x={298} $y={40} $w={138} $h={19} $bg="linear-gradient(to right, #eaeaea, #f2f2f2 60%, #fff)" />
                <Smudge $x={284} $y={77} $w={66} $h={21} $bg="linear-gradient(to right, #dadada, #e2e2e2 60%, #f4f4f4)" />
                <Smudge $x={238} $y={140} $w={134} $h={23} $bg="linear-gradient(to right, #cecece, #d4d4d4 70%, #f2f2f2)" />
                <Smudge $x={158} $y={193} $w={128} $h={19} $blur={4} $bg="linear-gradient(to right, #d8d8d8, #bebebe 40%, #c4c4c4)" />
              </Sheet>
            </Viewport>
            <Scroll $w={16} $track="#e8e8e8">
              <ScrollButton aria-label="Subir"><Chevron up /></ScrollButton>
              <Thumb $grow={168} $bg="#8a8a8a" />
              <Rest $grow={232} />
              <ScrollButton aria-label="Descer"><Chevron /></ScrollButton>
            </Scroll>
          </PaperRow>
        </Editor>

        <Panel>
          <PanelTitle>
            Painel auxiliar
            <button aria-label="Fechar painel">
              <svg width="9" height="9" viewBox="0 0 9 9"><path d="M1.5 1.5L7.5 7.5M7.5 1.5L1.5 7.5" stroke="#000" strokeWidth="1.8" /></svg>
            </button>
          </PanelTitle>
          <PanelBar>
            <ToolButton aria-label="Visualizar"><Icon name="docEye" /></ToolButton>
            <PanelMenu><span>Proprie<u>d</u>ades...</span><Caret /></PanelMenu>
          </PanelBar>
          <PanelBody>
            <Props>
              <Group>Propriedades do Documento<DoubleChevron /></Group>
              {DOC_PROPS.map(p => <PropItem key={p.id} p={p} />)}
              <Group $navy>Documento sem audiência vinculada<DoubleChevron side /></Group>
              <Group>Movimentação<DoubleChevron /></Group>
              {MOV_PROPS.map(p => <PropItem key={p.id} p={p} />)}
            </Props>
            <Scroll $w={16} $track="#f0f0f0">
              <ScrollButton aria-label="Subir"><Chevron up /></ScrollButton>
              <Thumb $grow={342} $bg="#cdcdcd" />
              <Rest $grow={53} />
            </Scroll>
          </PanelBody>
          <PanelBar>
            <Tools names={['copy', 'paste', 'pasteBack']} />
            <Divider />
            <Tools names={['first', 'prev', 'next', 'last']} />
            <Divider />
            <PanelButton>Fechar</PanelButton>
          </PanelBar>
        </Panel>
      </Workspace>

      <StatusBar>
        <StatusCells>
          <StatusCell $w={81}>Pág 1    1/1</StatusCell>
          <StatusCell $w={79}>Lin 0  Col 0</StatusCell>
          <StatusCell $w={41}>CAPS</StatusCell>
          <StatusCell $w={38}>NUM</StatusCell>
          <StatusCell $w={32}>INS</StatusCell>
          <StatusCell $w={68}>Hifenizado</StatusCell>
          <StatusCell $w={10} />
        </StatusCells>
        <ViewTools>
          <Tools names={['pageOne', 'pageLines']} />
          <ZoomGroup>
            <ZoomButton aria-label="Reduzir"><RoundSign /></ZoomButton>
            <ZoomRange type="range" aria-label="Zoom" defaultValue={49} />
            <ZoomButton aria-label="Ampliar"><RoundSign plus /></ZoomButton>
          </ZoomGroup>
        </ViewTools>
        <Grip>
          <svg width="12" height="12" viewBox="0 0 12 12" stroke="#8a8a8a" aria-hidden="true"><path d="M1 12L12 1M5 12L12 5M9 12L12 9" /></svg>
        </Grip>
      </StatusBar>
    </Shell>
  );
}
